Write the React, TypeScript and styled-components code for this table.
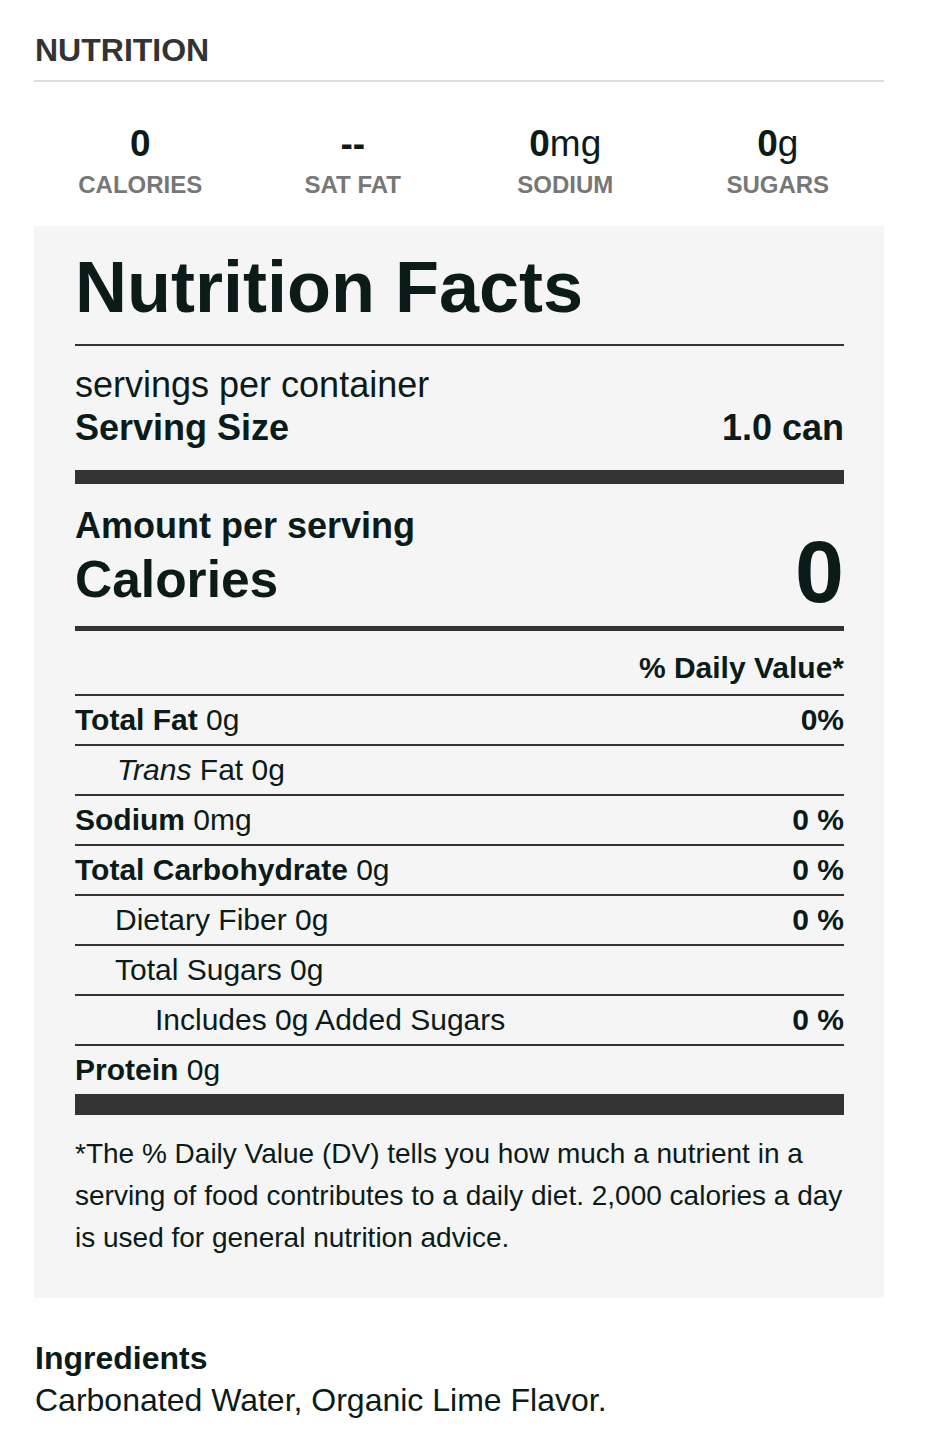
import React from "react";
import styled, { createGlobalStyle } from "styled-components";

const Global = createGlobalStyle`
  html, body { margin: 0; padding: 0; background: #ffffff; }
  body { font-family: "Liberation Sans", Arial, Helvetica, sans-serif; color: #0b1b18; }
  * { box-sizing: border-box; }
`;

const Page = styled.div`
  width: 926px;
  padding: 0 42px 0 34px;
`;

const Heading = styled.h2`
  margin: 0;
  padding: 31px 0 11px 1px;
  font-size: 32px;
  line-height: 38px;
  font-weight: 700;
  color: #333;
  border-bottom: 2px solid #ddd;
`;

const Stats = styled.div`
  display: grid;
  grid-template-columns: repeat(4, 1fr);
  padding: 42px 0 27px;
`;

const Stat = styled.div`
  display: flex;
  flex-direction: column;
  align-items: center;
  gap: 7px;
`;

const StatValue = styled.div`
  font-size: 37px;
  line-height: 40px;
  font-weight: 400;
  color: #0b1b18;
  b { font-weight: 700; }
`;

const StatLabel = styled.div`
  font-size: 24px;
  line-height: 28px;
  font-weight: 700;
  color: #777;
`;

const Panel = styled.section`
  background: #f5f5f5;
  padding: 21px 40px 39px 41px;
`;

const Title = styled.h1`
  margin: 0;
  font-size: 72px;
  line-height: 80px;
  font-weight: 700;
  padding-bottom: 17px;
  border-bottom: 2px solid #333;
`;

const ServingBlock = styled.div`
  padding-top: 17px;
  padding-bottom: 21px;
  border-bottom: 14px solid #333;
`;

const ServingLine = styled.div<{ $bold?: boolean }>`
  display: flex;
  justify-content: space-between;
  font-size: 36px;
  line-height: 43px;
  font-weight: ${(p) => (p.$bold ? 700 : 400)};
`;

const AmountBlock = styled.div`
  display: flex;
  justify-content: space-between;
  align-items: flex-end;
  padding-top: 22px;
  padding-bottom: 14px;
  border-bottom: 5px solid #333;
`;

const AmountLeft = styled.div`
  display: flex;
  flex-direction: column;
`;

const AmountLabel = styled.div`
  font-size: 36px;
  line-height: 40px;
  font-weight: 700;
`;

const CaloriesLabel = styled.div`
  font-size: 51.5px;
  line-height: 66px;
  font-weight: 700;
`;

const CaloriesValue = styled.div`
  font-size: 88px;
  line-height: 80px;
  font-weight: 700;
`;

const DVHeader = styled.div`
  text-align: right;
  font-size: 30px;
  line-height: 46px;
  font-weight: 700;
  padding: 14px 0 3px;
`;

const Row = styled.div<{ $indent?: number }>`
  display: flex;
  justify-content: space-between;
  border-top: 2px solid #333;
  padding: 1px 0 1px ${(p) => p.$indent ?? 0}px;
  font-size: 30px;
  line-height: 46px;
  b { font-weight: 700; }
  i { font-style: italic; }
`;

const Percent = styled.span`
  font-weight: 700;
`;

const ThickBar = styled.div`
  height: 21px;
  background: #333;
`;

const Footnote = styled.p`
  margin: 18px 0 0;
  font-size: 28px;
  line-height: 42px;
`;

const Ingredients = styled.div`
  padding: 39px 0 0 1px;
  font-size: 32px;
  line-height: 42px;
`;

const IngTitle = styled.div`
  font-weight: 700;
`;

type Nutrient = {
  label: React.ReactNode;
  indent?: number;
  pct?: string;
};

const rows: Nutrient[] = [
  { label: <><b>Total Fat</b> 0g</>, pct: "0%" },
  { label: <><i>Trans</i> Fat 0g</>, indent: 42 },
  { label: <><b>Sodium</b> 0mg</>, pct: "0 %" },
  { label: <><b>Total Carbohydrate</b> 0g</>, pct: "0 %" },
  { label: <>Dietary Fiber 0g</>, indent: 40, pct: "0 %" },
  { label: <>Total Sugars 0g</>, indent: 40 },
  { label: <>Includes 0g Added Sugars</>, indent: 80, pct: "0 %" },
  { label: <><b>Protein</b> 0g</> },
];

export default function App() {
  return (
    <Page>
      <Global />
      <Heading>NUTRITION</Heading>
      <Stats>
        <Stat>
          <StatValue><b>0</b></StatValue>
          <StatLabel>CALORIES</StatLabel>
        </Stat>
        <Stat>
          <StatValue><b>--</b></StatValue>
          <StatLabel>SAT FAT</StatLabel>
        </Stat>
        <Stat>
          <StatValue><b>0</b>mg</StatValue>
          <StatLabel>SODIUM</StatLabel>
        </Stat>
        <Stat>
          <StatValue><b>0</b>g</StatValue>
          <StatLabel>SUGARS</StatLabel>
        </Stat>
      </Stats>
      <Panel>
        <Title>Nutrition Facts</Title>
        <ServingBlock>
          <ServingLine>servings per container</ServingLine>
          <ServingLine $bold>
            <span>Serving Size</span>
            <span>1.0 can</span>
          </ServingLine>
        </ServingBlock>
        <AmountBlock>
          <AmountLeft>
            <AmountLabel>Amount per serving</AmountLabel>
            <CaloriesLabel>Calories</CaloriesLabel>
          </AmountLeft>
          <CaloriesValue>0</CaloriesValue>
        </AmountBlock>
        <DVHeader>% Daily Value*</DVHeader>
        {rows.map((r, i) => (
          <Row key={i} $indent={r.indent}>
            <span>{r.label}</span>
            {r.pct && <Percent>{r.pct}</Percent>}
          </Row>
        ))}
        <ThickBar />
        <Footnote>
          *The % Daily Value (DV) tells you how much a nutrient in a serving of food contributes to a daily diet. 2,000 calories a day is used for general nutrition advice.
        </Footnote>
      </Panel>
      <Ingredients>
        <IngTitle>Ingredients</IngTitle>
        <div>Carbonated Water, Organic Lime Flavor.</div>
      </Ingredients>
    </Page>
  );
}
